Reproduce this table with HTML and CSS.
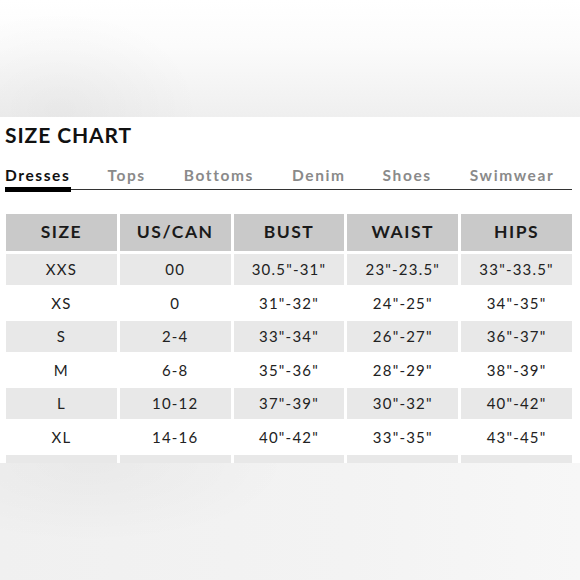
FILE: index.html
```html
<!DOCTYPE html>
<html>
<head>
<meta charset="utf-8">
<link rel="stylesheet" href="styles.css">
</head>
<body>
<div class="top-band"></div>
<section class="panel">
  <h1 class="title">SIZE CHART</h1>
  <nav class="tabs">
    <span class="tab active">Dresses</span>
    <span class="tab t-tops">Tops</span>
    <span class="tab t-bottoms">Bottoms</span>
    <span class="tab t-denim">Denim</span>
    <span class="tab t-shoes">Shoes</span>
    <span class="tab t-swim">Swimwear</span>
  </nav>
  <div class="chart">
    <div class="cell head">SIZE</div><div class="cell head">US/CAN</div><div class="cell head">BUST</div><div class="cell head">WAIST</div><div class="cell head">HIPS</div>
    <div class="cell alt">XXS</div><div class="cell alt">00</div><div class="cell alt">30.5"-31"</div><div class="cell alt">23"-23.5"</div><div class="cell alt">33"-33.5"</div>
    <div class="cell">XS</div><div class="cell">0</div><div class="cell">31"-32"</div><div class="cell">24"-25"</div><div class="cell">34"-35"</div>
    <div class="cell alt">S</div><div class="cell alt">2-4</div><div class="cell alt">33"-34"</div><div class="cell alt">26"-27"</div><div class="cell alt">36"-37"</div>
    <div class="cell">M</div><div class="cell">6-8</div><div class="cell">35"-36"</div><div class="cell">28"-29"</div><div class="cell">38"-39"</div>
    <div class="cell alt">L</div><div class="cell alt">10-12</div><div class="cell alt">37"-39"</div><div class="cell alt">30"-32"</div><div class="cell alt">40"-42"</div>
    <div class="cell">XL</div><div class="cell">14-16</div><div class="cell">40"-42"</div><div class="cell">33"-35"</div><div class="cell">43"-45"</div>
    <div class="cell alt"></div><div class="cell alt"></div><div class="cell alt"></div><div class="cell alt"></div><div class="cell alt"></div>
  </div>
</section>
<div class="bottom-band"></div>
</body>
</html>
```

FILE: styles.css
```css
html, body {
  margin: 0;
  padding: 0;
  width: 580px;
  height: 580px;
  overflow: hidden;
  background: #ffffff;
  font-family: Lato, "Open Sans", sans-serif;
}

.top-band {
  height: 117px;
  background:
    radial-gradient(ellipse 140px 100px at 60px 110px, rgba(0,0,0,0.035), rgba(0,0,0,0)),
    linear-gradient(to bottom, #ffffff 0%, #fbfbfb 40%, #efefef 100%);
}

.panel {
  height: 346px;
  overflow: hidden;
  background: #ffffff;
  padding: 0 8px 0 5px;
  box-sizing: border-box;
}

.title {
  margin: 0;
  padding-top: 5px;
  font-size: 21px;
  line-height: 25px;
  font-weight: 700;
  letter-spacing: 0.9px;
  color: #111111;
}

.tabs {
  display: flex;
  margin-top: 19px;
  height: 24px;
  border-bottom: 1.5px solid #333333;
  box-sizing: border-box;
  font-size: 15.5px;
  letter-spacing: 1.6px;
  line-height: 18px;
}

.tab {
  color: #8a8a8a;
  font-weight: 700;
  display: block;
}

.tab.active {
  color: #111111;
  border-bottom: 5px solid #000000;
  margin-bottom: -3px;
  padding-right: 1px;
}

.t-tops { margin-left: 36px; }
.t-bottoms { margin-left: 38px; }
.t-denim { margin-left: 38px; }
.t-shoes { margin-left: 37px; }
.t-swim { margin-left: 38px; }

.chart {
  margin-top: 24px;
  margin-left: 1px;
  display: grid;
  grid-template-columns: repeat(5, 1fr);
  grid-template-rows: 37px;
  grid-auto-rows: 30.5px;
  gap: 3px;
  width: 566px;
}

.cell {
  display: flex;
  align-items: center;
  justify-content: center;
  font-size: 15px;
  letter-spacing: 1.2px;
  color: #222222;
}

.cell.head {
  background: #c9c9c9;
  font-size: 17.5px;
  font-weight: 700;
  letter-spacing: 1.5px;
  color: #1a1a1a;
  padding-bottom: 3px;
  box-sizing: border-box;
}

.cell.alt {
  background: #e8e8e8;
}

.bottom-band {
  height: 117px;
  background:
    radial-gradient(ellipse 200px 80px at 90px 0px, rgba(0,0,0,0.03), rgba(0,0,0,0)),
    linear-gradient(to right, #f0f0f0 0%, #f3f3f3 60%, #f7f7f7 100%);
}
```
